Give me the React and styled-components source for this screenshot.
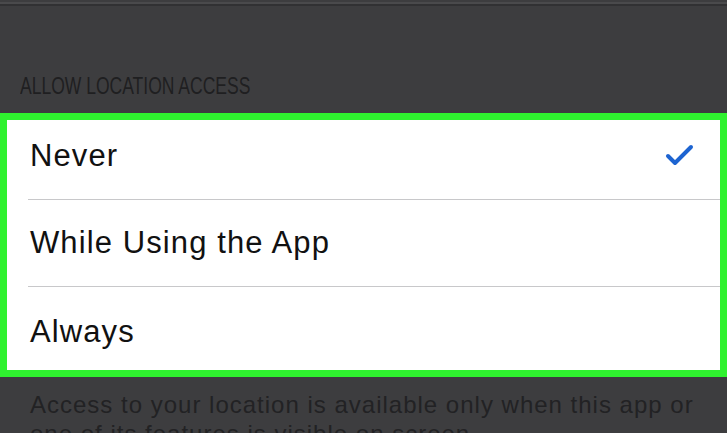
import styled, { createGlobalStyle } from "styled-components";

const GlobalStyle = createGlobalStyle`
    body{
        margin: 0;
        background: #3d3d3f;
        font-family: "Liberation Sans", Arial, sans-serif;
    }
`;

const options = [
    { label: "Never", height: 87, checked: true, divider: true },
    { label: "While Using the App", height: 87, checked: false, divider: true },
    { label: "Always", height: 90, checked: false, divider: false },
];

export default function App(){
    return(
        <Page>
            <GlobalStyle />
            <TopEdge />
            <SectionTitle><span>ALLOW LOCATION ACCESS</span></SectionTitle>
            <Panel>
                {options.map((option)=>{return(<Option option={option} key={option.label}/>)})}
            </Panel>
            <Footnote>Access to your location is available only when this app or one of its features is visible on screen.</Footnote>
        </Page>
    );
}

function Option({option}){
    return(
        <Row height={option.height}>
            <RowInner divider={option.divider}>
                <Label>{option.label}</Label>
                {option.checked ? (
                    <svg width="30" height="24" viewBox="0 0 30 24">
                        <polyline points="3,12 10,19 26,3" fill="none" stroke="#1d64d1" strokeWidth="4" strokeLinecap="round" strokeLinejoin="round" />
                    </svg>
                ) : null}
            </RowInner>
        </Row>
    );
}

const Page = styled.div`
    width: 727px;
    height: 433px;
    overflow: hidden;
    background: #3d3d3f;
    display: flex;
    flex-direction: column;
`;

const TopEdge = styled.div`
    height: 2px;
    margin-top: 2px;
    background: #4a4a4c;
    border-bottom: 2px solid #313133;
    flex-shrink: 0;
`;

const SectionTitle = styled.div`
    margin: 66px 0 13px 20px;
    font-size: 24px;
    line-height: 28px;
    color: #1f1f21;
    white-space: nowrap;
    & > span{
        display: inline-block;
        transform: scaleX(0.73);
        transform-origin: left center;
    }
`;

const Panel = styled.div`
    background: #ffffff;
    outline: 7px solid #2ff22f;
    outline-offset: -7px;
    display: flex;
    flex-direction: column;
    flex-shrink: 0;
`;

const Row = styled.div`
    height: ${props=>props.height}px;
    display: flex;
    padding-left: 28px;
`;

const RowInner = styled.div`
    flex: 1;
    display: flex;
    align-items: center;
    justify-content: space-between;
    padding: 0 32px 0 2px;
    border-bottom: ${props=>props.divider?'1.5px solid #c8c8ca':'none'};
`;

const Label = styled.span`
    font-size: 31px;
    letter-spacing: 1.1px;
    color: #111;
`;

const Footnote = styled.p`
    margin: 13px 20px 0 30px;
    font-size: 24px;
    line-height: 29px;
    letter-spacing: 1px;
    color: #222224;
`;
